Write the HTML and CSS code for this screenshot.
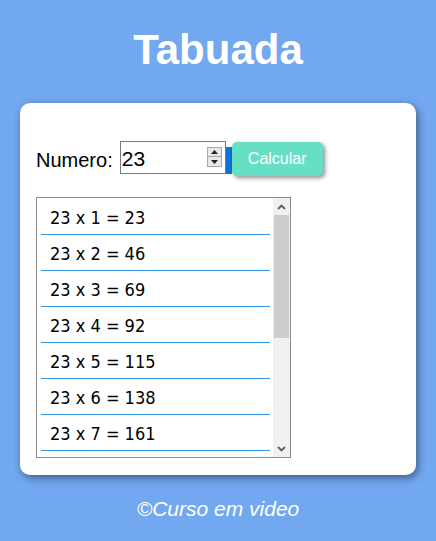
FILE: index.html
```html
<!DOCTYPE html>
<html lang="pt">
<head>
<meta charset="utf-8">
<title>Tabuada</title>
<link rel="stylesheet" href="styles.css">
</head>
<body>
<h1 class="title">Tabuada</h1>
<main class="card">
  <div class="form-row">
    <label class="label" for="num">Numero:</label>
    <div class="numbox">
      <input class="num-input" id="num" type="text" value="23">
      <div class="spinner">
        <span class="spin-btn"><svg width="7" height="4" viewBox="0 0 7 4"><path d="M0 4 L3.5 0 L7 4 Z" fill="#222"/></svg></span>
        <span class="spin-btn"><svg width="7" height="4" viewBox="0 0 7 4"><path d="M0 0 L3.5 4 L7 0 Z" fill="#222"/></svg></span>
      </div>
    </div>
    <span class="strip"></span>
    <button class="btn" type="button">Calcular</button>
  </div>
  <div class="listbox">
    <div class="list">
      <div class="item">23 x 1 = 23</div>
      <div class="item">23 x 2 = 46</div>
      <div class="item">23 x 3 = 69</div>
      <div class="item">23 x 4 = 92</div>
      <div class="item">23 x 5 = 115</div>
      <div class="item">23 x 6 = 138</div>
      <div class="item">23 x 7 = 161</div>
    </div>
    <div class="scrollbar">
      <span class="sb-arrow"><svg width="9" height="6" viewBox="0 0 9 6"><polyline points="1,5 4.5,1.5 8,5" fill="none" stroke="#606060" stroke-width="1.8"/></svg></span>
      <span class="sb-thumb"></span>
      <span class="sb-track"></span>
      <span class="sb-arrow"><svg width="9" height="6" viewBox="0 0 9 6"><polyline points="1,1 4.5,4.5 8,1" fill="none" stroke="#606060" stroke-width="1.8"/></svg></span>
    </div>
  </div>
</main>
<p class="footer">©Curso em video</p>
</body>
</html>
```

FILE: styles.css
```css
html, body {
  margin: 0;
  padding: 0;
}
body {
  background: #72a8f0;
  font-family: "Liberation Sans", Arial, sans-serif;
  padding: 26px 20px 0 20px;
  height: 541px;
  box-sizing: border-box;
}
.title {
  margin: 0;
  font-size: 42px;
  line-height: 48px;
  font-weight: bold;
  color: #fff;
  text-align: center;
}
.card {
  margin-top: 29px;
  width: 396px;
  box-sizing: border-box;
  background: #fff;
  border-radius: 10px;
  box-shadow: 2px 3px 8px rgba(0, 0, 0, 0.45);
  padding: 38px 16px 17px 16px;
}
.form-row {
  display: flex;
  align-items: flex-start;
  height: 35px;
}
.label {
  font-size: 20px;
  line-height: 33px;
  padding-top: 3px;
  color: #000;
  margin-right: 7px;
}
.numbox {
  display: flex;
  align-items: center;
  width: 106px;
  height: 33px;
  box-sizing: border-box;
  border: 1px solid #7a7a7a;
  background: #fff;
}
.num-input {
  flex: 1;
  min-width: 0;
  border: none;
  outline: none;
  background: transparent;
  font-family: "Liberation Sans", Arial, sans-serif;
  font-size: 21px;
  color: #000;
  padding: 2px 0 0 1px;
  margin: 0;
  height: 31px;
  box-sizing: border-box;
}
.spinner {
  display: flex;
  flex-direction: column;
  width: 15px;
  margin-right: 3px;
  margin-top: -1px;
}
.spin-btn {
  display: flex;
  align-items: center;
  justify-content: center;
  height: 10px;
  box-sizing: border-box;
  background: #e8e8e8;
  border: 1px solid #a8a8a8;
}
.spin-btn + .spin-btn {
  border-top: none;
  height: 10px;
}
.strip {
  width: 6px;
  height: 27px;
  margin-top: 6px;
  background: #0b74d8;
}
.btn {
  width: 91px;
  height: 34px;
  margin-top: 1px;
  border: none;
  border-radius: 5px;
  background: #66dfc5;
  color: #fff;
  font-family: "Liberation Sans", Arial, sans-serif;
  font-size: 16px;
  padding: 0;
  box-shadow: 2px 2px 4px rgba(0, 0, 0, 0.45);
}
.listbox {
  margin-top: 21px;
  display: flex;
  width: 255px;
  height: 261px;
  box-sizing: border-box;
  border: 1px solid #888c90;
  background: #fff;
}
.list {
  flex: 1;
  overflow: hidden;
  padding-top: 1px;
}
.item {
  margin: 0 3px 0 4px;
  height: 36px;
  box-sizing: border-box;
  padding: 2px 0 0 9px;
  line-height: 33px;
  border-bottom: 1px solid #3297e8;
  font-family: "DejaVu Sans Condensed", "DejaVu Sans", sans-serif;
  font-size: 18px;
  color: #000;
  white-space: nowrap;
}
.scrollbar {
  width: 17px;
  display: flex;
  flex-direction: column;
  background: #f0f0f0;
}
.sb-arrow {
  height: 17px;
  display: flex;
  align-items: center;
  justify-content: center;
  flex: none;
}
.sb-thumb {
  height: 123px;
  margin: 0 1px;
  background: #cdcdcd;
  flex: none;
}
.sb-track {
  flex: 1;
}
.footer {
  margin: 22px 0 0 0;
  text-align: center;
  color: #fff;
  font-style: italic;
  font-size: 21px;
  line-height: 24px;
}
```
